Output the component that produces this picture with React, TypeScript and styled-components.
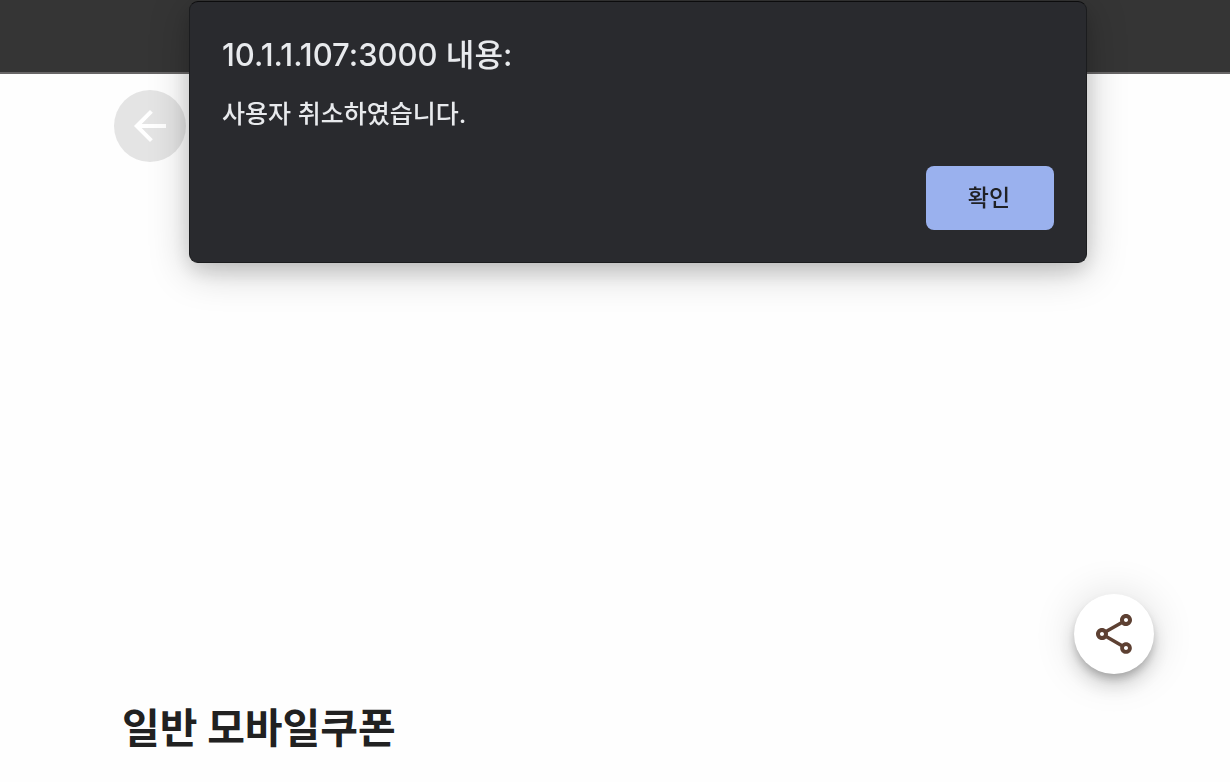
import React from "react";
import styled, { createGlobalStyle } from "styled-components";
import { MdArrowBack, MdOutlineShare } from "react-icons/md";

const GlobalStyle = createGlobalStyle`
  * { box-sizing: border-box; }
  body {
    margin: 0;
    background: #fefefe;
    color: #212121;
    font-family: Inter, "Noto Sans CJK KR", sans-serif;
  }
`;

const Page = styled.div`
  display: flex;
  flex-direction: column;
  min-height: 100vh;
`;

const TopBar = styled.header`
  height: 74px;
  background: #353535;
  border-bottom: 2px solid #686667;
`;

const Content = styled.main`
  flex: 1;
  display: flex;
  flex-direction: column;
  justify-content: space-between;
  align-items: flex-start;
  padding: 16px 114px 24px;
`;

const RoundButton = styled.button<{ $size: number }>`
  display: flex;
  align-items: center;
  justify-content: center;
  width: ${(p) => p.$size}px;
  height: ${(p) => p.$size}px;
  padding: 0;
  border: 0;
  border-radius: 50%;
`;

const BackButton = styled(RoundButton)`
  background: #e4e4e4;
  color: #fff;
`;

const ShareButton = styled(RoundButton)`
  position: fixed;
  right: 76px;
  bottom: 108px;
  background: #fff;
  color: #5d4032;
  box-shadow:
    0 6px 10px -2px rgba(0, 0, 0, 0.24),
    0 12px 20px 0 rgba(0, 0, 0, 0.14),
    0 2px 44px 0 rgba(0, 0, 0, 0.14);
`;

const ProductTitle = styled.h1`
  margin: 0;
  padding-left: 8px;
  font-size: 41px;
  line-height: 60px;
  font-weight: 700;
`;

const DialogLayer = styled.div`
  position: fixed;
  inset: 0;
  display: flex;
  justify-content: center;
  align-items: flex-start;
  padding: 1px 0 0 46px;
  pointer-events: none;
`;

const Dialog = styled.section`
  display: flex;
  flex-direction: column;
  width: 898px;
  max-width: 100%;
  padding: 32px;
  border: 1px solid #0c0c0d;
  border-color: #0c0c0d #1b1c1e #1b1c1e;
  border-radius: 9px;
  background: #292a2e;
  color: #e8eaed;
  box-shadow:
    0 8px 40px rgba(0, 0, 0, 0.22),
    0 8px 20px rgba(0, 0, 0, 0.12);
  pointer-events: auto;
`;

const DialogTitle = styled.h2`
  margin: 0;
  font-size: 31px;
  line-height: 42px;
  font-weight: 500;
`;

const DialogMessage = styled.p`
  margin: 18px 0 0;
  font-size: 25px;
  line-height: 40px;
  font-weight: 500;
`;

const ConfirmButton = styled.button`
  align-self: flex-end;
  width: 128px;
  height: 64px;
  margin-top: 32px;
  padding: 0 2px 4px 0;
  border: 0;
  border-radius: 8px;
  background: #9ab1ee;
  color: #202124;
  font-family: inherit;
  font-size: 23px;
  font-weight: 500;
`;

export default function App() {
  return (
    <>
      <GlobalStyle />
      <Page>
        <TopBar />
        <Content>
          <BackButton $size={72} type="button" aria-label="뒤로">
            <MdArrowBack size={48} />
          </BackButton>
          <ProductTitle>일반 모바일쿠폰</ProductTitle>
        </Content>
        <ShareButton $size={80} type="button" aria-label="공유">
          <MdOutlineShare size={48} />
        </ShareButton>
      </Page>
      <DialogLayer>
        <Dialog role="alertdialog" aria-labelledby="dialog-title" aria-describedby="dialog-message">
          <DialogTitle id="dialog-title">10.1.1.107:3000 내용:</DialogTitle>
          <DialogMessage id="dialog-message">사용자 취소하였습니다.</DialogMessage>
          <ConfirmButton type="button">확인</ConfirmButton>
        </Dialog>
      </DialogLayer>
    </>
  );
}
